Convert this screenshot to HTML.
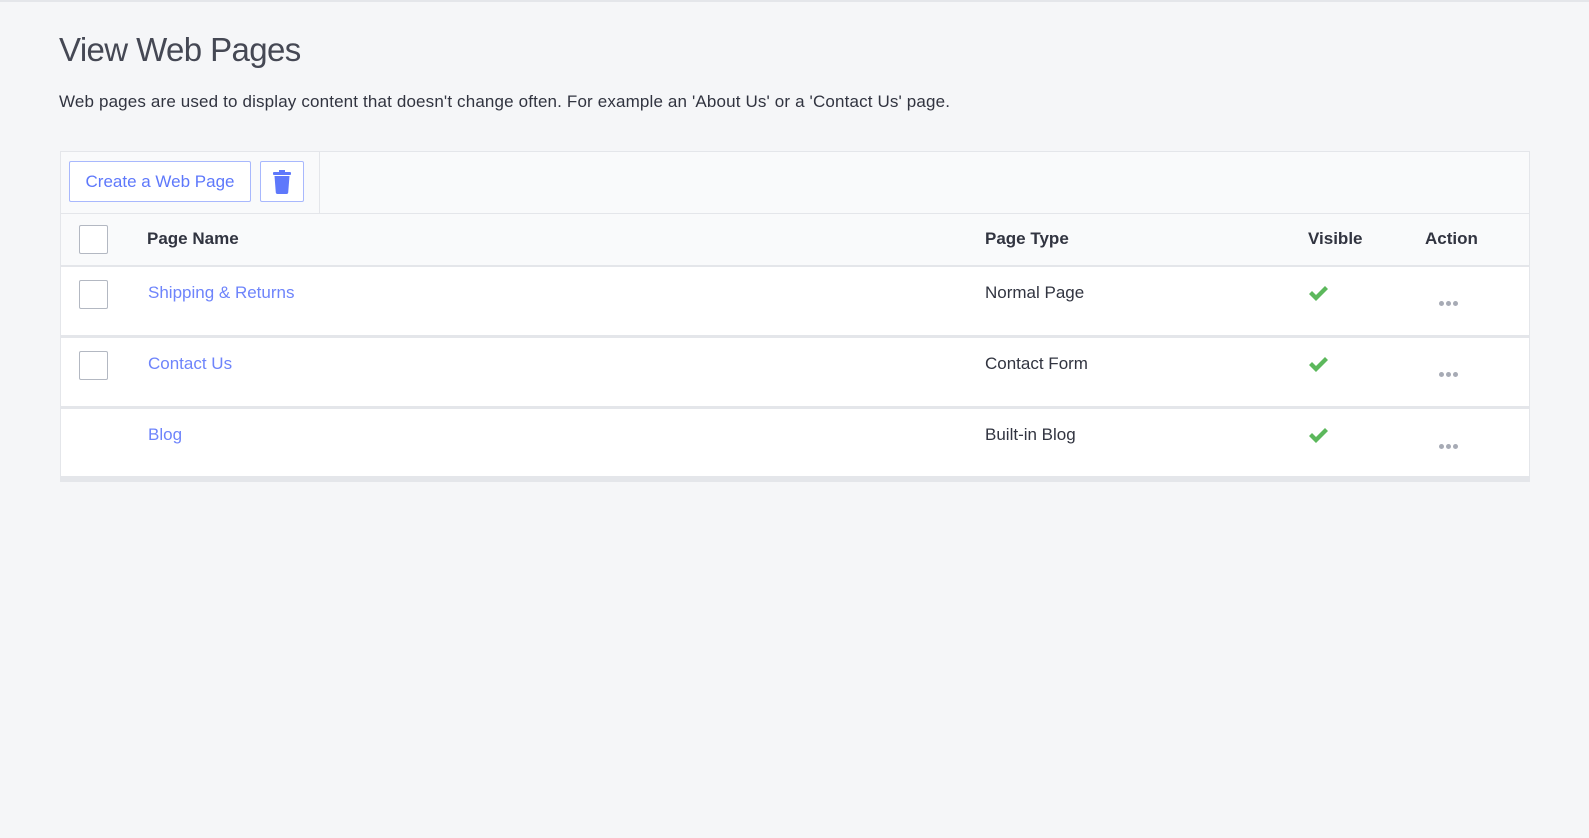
<!DOCTYPE html>
<html><head><style>
body{margin:0;width:1589px;height:838px;background:#f5f6f8;font-family:"Liberation Sans",sans-serif;color:#313440;overflow:hidden;border-top:2px solid #e4e6ea;box-sizing:border-box}
h1{position:absolute;left:59px;top:31px;margin:0;font-size:33px;font-weight:300;color:#454854;letter-spacing:-0.6px}
.desc{position:absolute;left:59px;top:92px;font-size:17px;letter-spacing:0.15px}
.tbl{position:absolute;left:60px;top:151px;width:1470px;height:331px;background:#e4e6ea;border:1px solid #e4e6ea;box-sizing:border-box}
.tool{position:absolute;left:0;top:0;width:1468px;height:61px;background:#f9fafb;border-bottom:1px solid #e4e6ea}
.tool .sep{position:absolute;left:258px;top:0;width:1px;height:61px;background:#e4e6ea}
.btn{position:absolute;top:9px;height:41px;border:1px solid #a8b8fd;background:#fff;border-radius:2px;box-sizing:border-box;color:#5e78fb;font-size:17px;line-height:39px;text-align:center}
.head{position:absolute;left:0;top:62px;width:1468px;height:51px;background:#f9fafb;font-weight:bold;font-size:17px}
.row{position:absolute;left:0;width:1468px;height:68px;background:#fff;font-size:17px}
.cb{position:absolute;left:18px;width:29px;height:29px;border:1px solid #b3b8c2;border-radius:2px;background:#fff;box-sizing:border-box}
.t{position:absolute}
.a{color:#6e84fb}
.dots{position:absolute;left:1378px;font-size:0}
.dots i{display:inline-block;width:5px;height:5px;border-radius:50%;background:#a7abb5;margin-right:2px}
</style></head><body>
<h1>View Web Pages</h1>
<div class="desc">Web pages are used to display content that doesn't change often. For example an 'About Us' or a 'Contact Us' page.</div>
<div class="tbl">
 <div class="tool"><div class="sep"></div>
  <div class="btn" style="left:8px;width:182px">Create a Web Page</div>
  <div class="btn" style="left:199px;width:44px"><svg width="18" height="24" viewBox="0 0 18 24" style="margin-top:8px"><rect x="0" y="2" width="18" height="3" rx="1" fill="#5e78fb"/><rect x="6" y="0" width="6" height="3" fill="#5e78fb"/><path d="M1.5 6h15l-1.3 16.5c-.1 1-.8 1.5-1.7 1.5H4.5c-.9 0-1.6-.5-1.7-1.5z" fill="#5e78fb"/></svg></div>
 </div>
 <div class="head">
  <div class="cb" style="top:11px"></div>
  <div class="t" style="left:86px;top:15px">Page Name</div>
  <div class="t" style="left:924px;top:15px">Page Type</div>
  <div class="t" style="left:1247px;top:15px">Visible</div>
  <div class="t" style="left:1364px;top:15px">Action</div>
 </div>
 <div class="row" style="top:115px">
  <div class="cb" style="top:13px"></div>
  <div class="t a" style="left:87px;top:16px">Shipping &amp; Returns</div>
  <div class="t" style="left:924px;top:16px">Normal Page</div>
  <svg class="t" style="left:1247px;top:18px" width="20" height="16" viewBox="0 0 20 16"><path d="M1 9l3-3 4 4 9-9 3 3-12 12z" fill="#5cb85c"/></svg>
  <div class="dots" style="top:34px"><i></i><i></i><i></i></div>
 </div>
 <div class="row" style="top:186px">
  <div class="cb" style="top:13px"></div>
  <div class="t a" style="left:87px;top:16px">Contact Us</div>
  <div class="t" style="left:924px;top:16px">Contact Form</div>
  <svg class="t" style="left:1247px;top:18px" width="20" height="16" viewBox="0 0 20 16"><path d="M1 9l3-3 4 4 9-9 3 3-12 12z" fill="#5cb85c"/></svg>
  <div class="dots" style="top:34px"><i></i><i></i><i></i></div>
 </div>
 <div class="row" style="top:257px;height:67px">
  <div class="t a" style="left:87px;top:16px">Blog</div>
  <div class="t" style="left:924px;top:16px">Built-in Blog</div>
  <svg class="t" style="left:1247px;top:18px" width="20" height="16" viewBox="0 0 20 16"><path d="M1 9l3-3 4 4 9-9 3 3-12 12z" fill="#5cb85c"/></svg>
  <div class="dots" style="top:35px"><i></i><i></i><i></i></div>
 </div>
</div>
</body></html>
